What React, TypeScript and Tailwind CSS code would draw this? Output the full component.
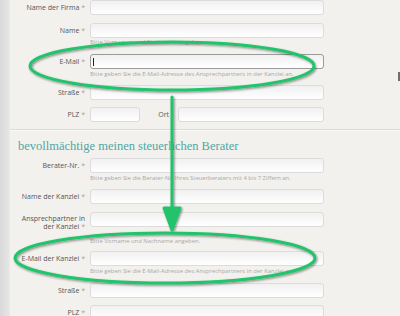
import type { ReactNode } from 'react'

const labelFont = { fontFamily: '"Open Sans", "Liberation Sans", sans-serif' }

function Req() {
  return <span className="text-[#a5a5a5]"> *</span>
}

function Input({ w = 'w-[234px]', active = false }: { w?: string; active?: boolean }) {
  return (
    <div
      className={`relative h-[15px] ${w} shrink-0 rounded-[3px] border bg-linear-to-b from-[#f1f1f1] to-white ${
        active ? 'border-[#9b9b9b]' : 'border-[#dcdcdc]'
      }`}
    >
      {active && <div className="absolute left-[2px] top-[3px] h-[8px] w-px bg-[#222]" />}
    </div>
  )
}

function Help({ children, mt = 'mt-[2px]' }: { children: ReactNode; mt?: string }) {
  return <div className={`${mt} h-[7px] pl-[80px] text-[5.9px] leading-[7px] text-[#a9a9a9] whitespace-nowrap`}>{children}</div>
}

function Row({ label, children, twoLine = false }: { label: ReactNode; children: ReactNode; twoLine?: boolean }) {
  return (
    <div className={`flex ${twoLine ? 'items-start' : 'items-center'}`}>
      <div className={`w-[80px] shrink-0 pr-[5px] text-right text-[7px] leading-[8px] text-[#555] ${twoLine ? 'pt-[3px]' : ''}`}>
        {label}
      </div>
      {children}
    </div>
  )
}

function Annotations() {
  return (
    <svg className="pointer-events-none absolute inset-0" width="400" height="316" viewBox="0 0 400 316">
      <defs>
        <filter id="sh" x="-10%" y="-10%" width="120%" height="120%">
          <feDropShadow dx="1" dy="1.2" stdDeviation="0.8" floodColor="#000" floodOpacity="0.45" />
        </filter>
      </defs>
      <g filter="url(#sh)" stroke="#22c36b" strokeWidth="3" fill="none" strokeLinecap="round" strokeLinejoin="round">
        <ellipse cx="172" cy="66" rx="142" ry="24" />
        <path d="M172 97 L172 222" />
        <path d="M164 208 L172 230 L180 208 Z" fill="#22c36b" />
        <ellipse cx="165" cy="258" rx="150" ry="25" />
      </g>
    </svg>
  )
}

export default function App() {
  return (
    <div className="relative flex h-[316px] w-[400px] overflow-hidden bg-[#f2f1ed]" style={labelFont}>
      <div className="w-[10px] shrink-0 border-r border-[#e9e9e6] bg-linear-to-r from-[#d9d9d9] to-[#e6e6e6]" />
      <div className="flex-1">
        <div className="mr-[66px]">
          <div className="mb-[8px]">
            <Row label={<>Name der Firma<Req /></>}>
              <Input />
            </Row>
          </div>
          <div className="mb-[8px]">
            <Row label={<>Name<Req /></>}>
              <Input />
            </Row>
            <Help mt="mt-[1px]">Bitte Vornamen und Nachname angeben.</Help>
          </div>
          <div className="mb-[7px]">
            <Row label={<>E-Mail<Req /></>}>
              <Input active />
            </Row>
            <Help>Bitte geben Sie die E-Mail-Adresse des Ansprechpartners in der Kanzlei an.</Help>
          </div>
          <div className="mb-[7px]">
            <Row label={<>Straße<Req /></>}>
              <Input />
            </Row>
          </div>
          <div className="mb-[7px]">
            <Row label={<>PLZ<Req /></>}>
              <Input w="w-[50px]" />
              <div className="w-[38px] shrink-0 pr-[9px] text-right text-[7px] leading-[8px] text-[#555]">Ort</div>
              <Input w="w-[146px]" />
            </Row>
          </div>
        </div>
        <div className="border-t border-[#dcdbd7] shadow-[0_1px_0_#fbfbfa]" />
        <div className="mr-[66px]">
          <h2
            className="mb-[5px] mt-[9px] pl-[8px] text-[12.5px] leading-[14px] text-[#4fa7a4]"
            style={{ fontFamily: '"Liberation Serif", "DejaVu Serif", serif' }}
          >
            bevollmächtige meinen steuerlichen Berater
          </h2>
          <div className="mb-[7px]">
            <Row label={<>Berater-Nr.<Req /></>}>
              <Input />
            </Row>
            <Help>Bitte geben Sie die Berater-Nr. Ihres Steuerberaters mit 4 bis 7 Ziffern an.</Help>
          </div>
          <div className="mb-[8px]">
            <Row label={<>Name der Kanzlei<Req /></>}>
              <Input />
            </Row>
          </div>
          <div className="mb-[6px]">
            <Row twoLine label={<>Ansprechpartner in<br />der Kanzlei<Req /></>}>
              <Input />
            </Row>
            <Help mt="mt-[7px]">Bitte Vorname und Nachname angeben.</Help>
          </div>
          <div className="mb-[8px]">
            <Row label={<>E-Mail der Kanzlei<Req /></>}>
              <Input />
            </Row>
            <Help>Bitte geben Sie die E-Mail-Adresse des Ansprechpartners in der Kanzlei an.</Help>
          </div>
          <div className="mb-[7px]">
            <Row label={<>Straße<Req /></>}>
              <Input />
            </Row>
          </div>
          <div>
            <Row label={<>PLZ<Req /></>}>
              <Input />
            </Row>
          </div>
        </div>
      </div>
      <div className="absolute right-0 top-[72px] h-[9px] w-[2px] bg-[#6f6f6f]" />
      <Annotations />
    </div>
  )
}
